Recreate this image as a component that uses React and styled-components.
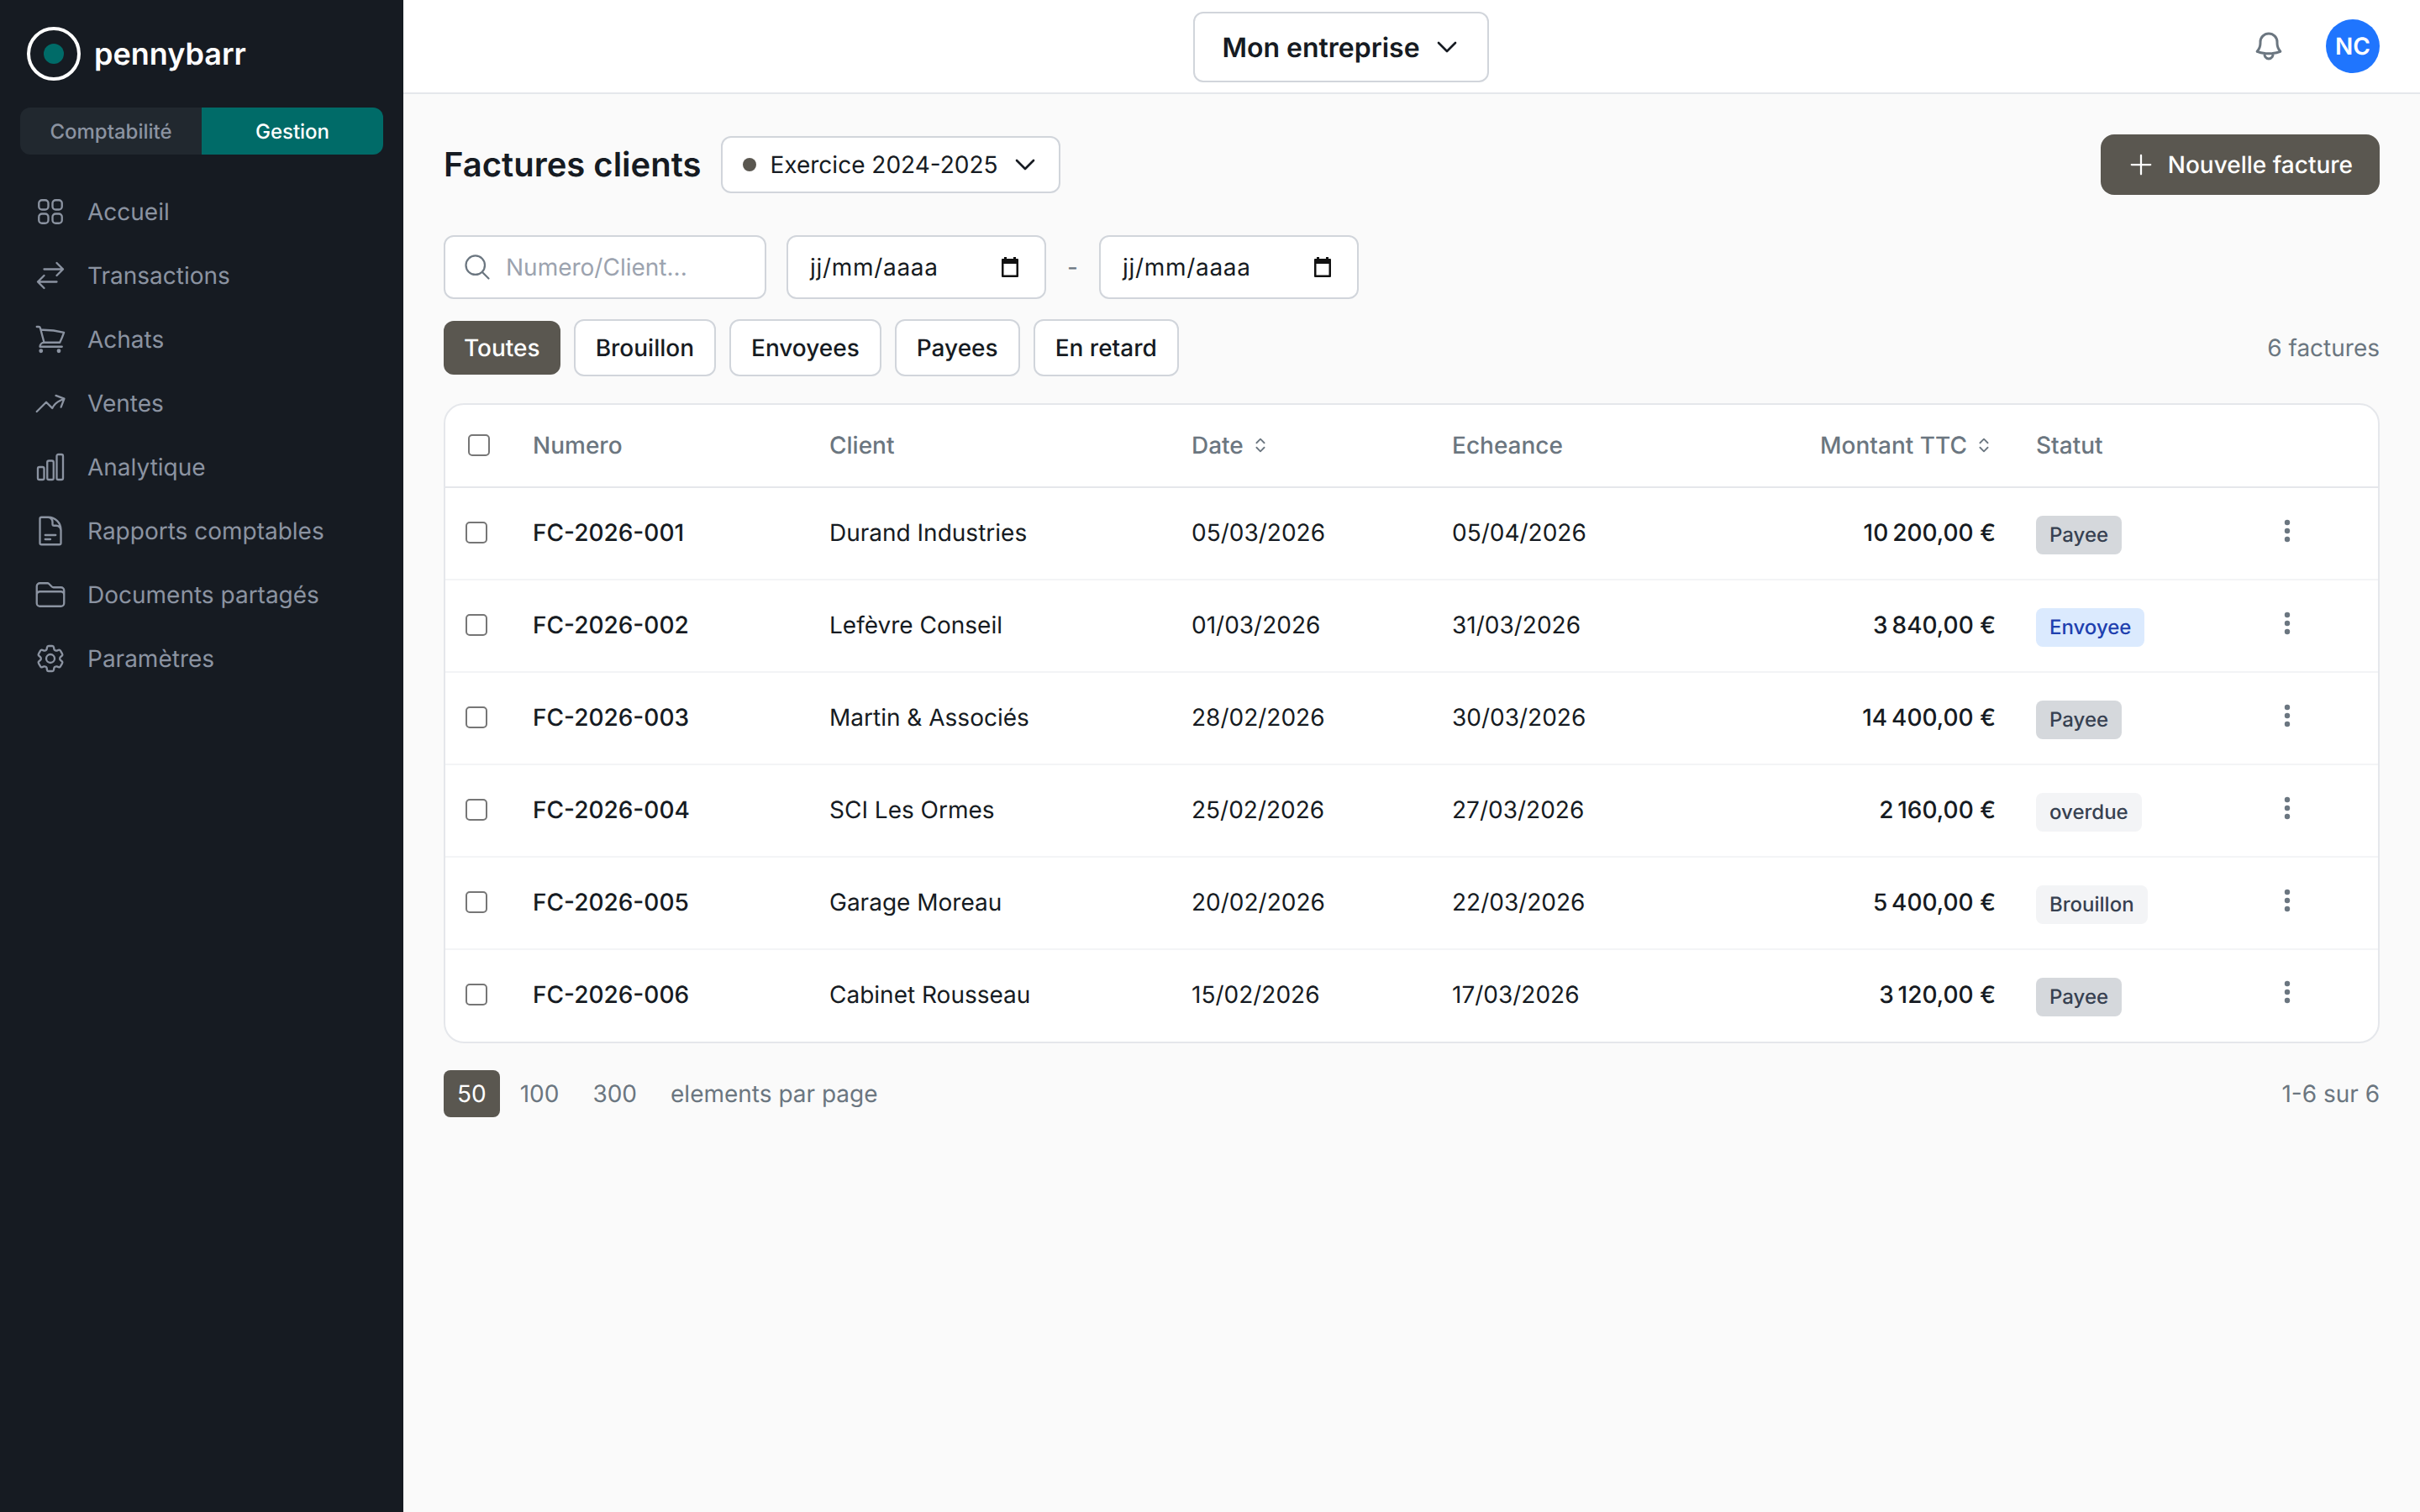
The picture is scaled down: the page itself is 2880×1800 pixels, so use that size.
import React from 'react';
import styled, { createGlobalStyle } from 'styled-components';
import { ChevronsUpDown } from 'lucide-react';
import {
  HiOutlineSquares2X2,
  HiOutlineArrowsRightLeft,
  HiOutlineShoppingCart,
  HiOutlineArrowTrendingUp,
  HiOutlineChartBar,
  HiOutlineDocumentText,
  HiOutlineFolder,
  HiOutlineCog6Tooth,
  HiOutlineBell,
  HiOutlineChevronDown,
  HiOutlinePlus,
  HiOutlineMagnifyingGlass,
} from 'react-icons/hi2';

const navList = [
  { id: 0, title: 'Accueil', icon: HiOutlineSquares2X2 },
  { id: 1, title: 'Transactions', icon: HiOutlineArrowsRightLeft },
  { id: 2, title: 'Achats', icon: HiOutlineShoppingCart },
  { id: 3, title: 'Ventes', icon: HiOutlineArrowTrendingUp },
  { id: 4, title: 'Analytique', icon: HiOutlineChartBar },
  { id: 5, title: 'Rapports comptables', icon: HiOutlineDocumentText },
  { id: 6, title: 'Documents partagés', icon: HiOutlineFolder },
  { id: 7, title: 'Paramètres', icon: HiOutlineCog6Tooth },
];

const invoices = [
  { id: 'FC-2026-001', client: 'Durand Industries', date: '05/03/2026', due: '05/04/2026', amount: '10\u202f200,00 €', status: 'Payee', kind: 'paid' },
  { id: 'FC-2026-002', client: 'Lefèvre Conseil', date: '01/03/2026', due: '31/03/2026', amount: '3\u202f840,00 €', status: 'Envoyee', kind: 'sent' },
  { id: 'FC-2026-003', client: 'Martin & Associés', date: '28/02/2026', due: '30/03/2026', amount: '14\u202f400,00 €', status: 'Payee', kind: 'paid' },
  { id: 'FC-2026-004', client: 'SCI Les Ormes', date: '25/02/2026', due: '27/03/2026', amount: '2\u202f160,00 €', status: 'overdue', kind: 'draft' },
  { id: 'FC-2026-005', client: 'Garage Moreau', date: '20/02/2026', due: '22/03/2026', amount: '5\u202f400,00 €', status: 'Brouillon', kind: 'draft' },
  { id: 'FC-2026-006', client: 'Cabinet Rousseau', date: '15/02/2026', due: '17/03/2026', amount: '3\u202f120,00 €', status: 'Payee', kind: 'paid' },
];

const filters = ['Toutes', 'Brouillon', 'Envoyees', 'Payees', 'En retard'];

const badgeColors = {
  paid: { bg: '#d5d8dc', fg: '#374151' },
  sent: { bg: '#dbeafe', fg: '#1e40af' },
  draft: { bg: '#f3f4f6', fg: '#374151' },
};

function CalendarIcon() {
  return (
    <svg width="26" height="26" viewBox="0 0 26 26">
      <path d="M6 1h3v2h8V1h3v2h2a1 1 0 0 1 1 1v20a1 1 0 0 1-1 1H4a1 1 0 0 1-1-1V4a1 1 0 0 1 1-1h2z" fill="#111" />
      <rect x="5.5" y="9" width="15" height="13.5" fill="#fff" />
    </svg>
  );
}

function Kebab() {
  return (
    <svg width="12" height="28" viewBox="0 0 12 28" fill="#6b7680">
      <circle cx="6" cy="4" r="3.2" />
      <circle cx="6" cy="14" r="3.2" />
      <circle cx="6" cy="24" r="3.2" />
    </svg>
  );
}

function DateField() {
  return (
    <DateBox>
      <span>jj/mm/aaaa</span>
      <CalendarIcon />
    </DateBox>
  );
}

export default function App() {
  return (
    <>
      <GlobalStyle />
      <Layout>
        <Sidebar>
          <Logo>
            <svg width="64" height="64" viewBox="0 0 64 64">
              <circle cx="32" cy="32" r="30" fill="none" stroke="#fff" strokeWidth="4" />
              <circle cx="32" cy="32" r="12" fill="#006b68" />
            </svg>
            <LogoText>pennybarr</LogoText>
          </Logo>
          <Switcher>
            <SwitchItem>Comptabilité</SwitchItem>
            <SwitchItem $active>Gestion</SwitchItem>
          </Switcher>
          <Nav>
            {navList.map(item => {
              const Icon = item.icon;
              return (
                <NavItem key={item.id}>
                  <Icon size={40} />
                  <span>{item.title}</span>
                </NavItem>
              );
            })}
          </Nav>
        </Sidebar>

        <Main>
          <Topbar>
            <span />
            <CompanySelect>
              Mon entreprise
              <HiOutlineChevronDown size={32} strokeWidth={2} />
            </CompanySelect>
            <TopRight>
              <BellButton><HiOutlineBell size={40} color="#6b7680" strokeWidth={1.8} /></BellButton>
              <Avatar>NC</Avatar>
            </TopRight>
          </Topbar>

          <Content>
            <TitleRow>
              <Title>Factures clients</Title>
              <YearSelect>
                <YearDot />
                Exercice 2024-2025
                <HiOutlineChevronDown size={32} strokeWidth={2} />
              </YearSelect>
              <PrimaryButton>
                <HiOutlinePlus size={36} />
                Nouvelle facture
              </PrimaryButton>
            </TitleRow>

            <FilterRow>
              <SearchBox>
                <HiOutlineMagnifyingGlass size={36} color="#6b7680" />
                <span>Numero/Client...</span>
              </SearchBox>
              <DateField />
              <Dash>-</Dash>
              <DateField />
            </FilterRow>

            <TabsRow>
              {filters.map((label, i) => (
                <Tab key={label} $active={i === 0}>{label}</Tab>
              ))}
              <Count>6 factures</Count>
            </TabsRow>

            <Card>
              <Table>
                <colgroup>
                  <col style={{ width: 80 }} />
                  <col style={{ width: 353 }} />
                  <col style={{ width: 431 }} />
                  <col style={{ width: 310 }} />
                  <col style={{ width: 360 }} />
                  <col style={{ width: 335 }} />
                  <col style={{ width: 240 }} />
                  <col style={{ width: 191 }} />
                </colgroup>
                <thead>
                  <tr>
                    <HeadCell><Check $head /></HeadCell>
                    <HeadCell>Numero</HeadCell>
                    <HeadCell>Client</HeadCell>
                    <HeadCell><SortLabel>Date <ChevronsUpDown size={22} /></SortLabel></HeadCell>
                    <HeadCell>Echeance</HeadCell>
                    <HeadCell $right><SortLabel>Montant TTC <ChevronsUpDown size={22} /></SortLabel></HeadCell>
                    <HeadCell>Statut</HeadCell>
                    <HeadCell />
                  </tr>
                </thead>
                <tbody>
                  {invoices.map(row => (
                    <tr key={row.id}>
                      <BodyCell><Check /></BodyCell>
                      <BodyCell $medium>{row.id}</BodyCell>
                      <BodyCell>{row.client}</BodyCell>
                      <BodyCell>{row.date}</BodyCell>
                      <BodyCell>{row.due}</BodyCell>
                      <BodyCell $right $medium>{row.amount}</BodyCell>
                      <BadgeCell><Badge $kind={row.kind}>{row.status}</Badge></BadgeCell>
                      <ActionCell><Kebab /></ActionCell>
                    </tr>
                  ))}
                </tbody>
              </Table>
            </Card>

            <Pagination>
              <PageSize $active>50</PageSize>
              <PageSize>100</PageSize>
              <PageSize>300</PageSize>
              <PageLabel>elements par page</PageLabel>
              <PageRange>1-6 sur 6</PageRange>
            </Pagination>
          </Content>
        </Main>
      </Layout>
    </>
  );
}

const GlobalStyle = createGlobalStyle`
  * { box-sizing: border-box; }
  html, body { margin: 0; padding: 0; }
  body {
    font-family: Inter, "Liberation Sans", sans-serif;
    color: #161b22;
    background: #fafafa;
    text-rendering: geometricPrecision;
  }
`;

const Layout = styled.div`
  display: flex;
  width: 2880px;
  height: 1800px;
  overflow: hidden;
`;

const Sidebar = styled.aside`
  flex: 0 0 480px;
  background: #161b22;
  display: flex;
  flex-direction: column;
`;

const Logo = styled.div`
  display: flex;
  align-items: center;
  gap: 16px;
  padding: 32px 32px 0;
`;

const LogoText = styled.span`
  font-size: 36px;
  font-weight: 600;
  color: #fff;
`;

const Switcher = styled.div`
  display: flex;
  height: 56px;
  margin: 32px 24px 0;
  border-radius: 12px;
  overflow: hidden;
`;

const SwitchItem = styled.div`
  flex: 1;
  display: flex;
  align-items: center;
  justify-content: center;
  font-size: 24px;
  font-weight: 500;
  color: ${p => (p.$active ? '#fff' : '#8b93a1')};
  background: ${p => (p.$active ? '#006b68' : '#21282f')};
`;

const Nav = styled.nav`
  display: flex;
  flex-direction: column;
  padding: 30px 24px 0;
`;

const NavItem = styled.div`
  display: flex;
  align-items: center;
  gap: 24px;
  height: 76px;
  padding-left: 16px;
  font-size: 28px;
  color: #8b93a1;
  svg { stroke-width: 1.4; }
`;

const Main = styled.div`
  flex: 1;
  min-width: 0;
  display: flex;
  flex-direction: column;
`;

const Topbar = styled.header`
  display: flex;
  align-items: center;
  justify-content: space-between;
  height: 112px;
  padding: 0 48px;
  background: #fff;
  border-bottom: 2px solid #e5e7eb;
`;

const CompanySelect = styled.div`
  display: flex;
  align-items: center;
  gap: 16px;
  height: 84px;
  margin-top: 2px;
  padding: 0 32px;
  background: #fff;
  border: 2px solid #d1d5db;
  border-radius: 12px;
  font-size: 32px;
  font-weight: 600;
`;

const TopRight = styled.div`
  display: flex;
  align-items: center;
  gap: 32px;
`;

const BellButton = styled.div`
  display: flex;
  align-items: center;
  justify-content: center;
  width: 72px;
  height: 72px;
`;

const Avatar = styled.div`
  width: 64px;
  height: 64px;
  border-radius: 50%;
  background: #1f75fe;
  color: #fff;
  display: flex;
  align-items: center;
  justify-content: center;
  font-size: 28px;
  font-weight: 600;
`;

const Content = styled.main`
  flex: 1;
  padding: 48px 48px 0;
  background: #fafafa;
`;

const TitleRow = styled.div`
  display: flex;
  align-items: center;
  gap: 24px;
  height: 72px;
`;

const Title = styled.h1`
  margin: 0 0 2px;
  font-size: 40px;
  font-weight: 600;
`;

const YearSelect = styled.div`
  display: flex;
  align-items: center;
  gap: 16px;
  height: 68px;
  padding: 0 24px;
  background: #fff;
  border: 2px solid #d1d5db;
  border-radius: 12px;
  font-size: 28px;
`;

const YearDot = styled.span`
  width: 16px;
  height: 16px;
  border-radius: 50%;
  background: #5a5750;
`;

const PrimaryButton = styled.div`
  margin-left: auto;
  display: flex;
  align-items: center;
  gap: 14px;
  height: 72px;
  padding: 0 32px 0 30px;
  border-radius: 16px;
  background: #5a5750;
  color: #fff;
  font-size: 28px;
  font-weight: 500;
`;

const FilterRow = styled.div`
  display: flex;
  align-items: center;
  gap: 24px;
  margin-top: 48px;
`;

const FieldBox = styled.div`
  display: flex;
  align-items: center;
  height: 76px;
  background: #fff;
  border: 2px solid #d1d5db;
  border-radius: 12px;
  font-size: 28px;
`;

const SearchBox = styled(FieldBox)`
  width: 384px;
  gap: 16px;
  padding: 0 20px;
  color: #9ca3af;
`;

const DateBox = styled(FieldBox)`
  width: 309px;
  justify-content: space-between;
  padding: 0 28px 0 26px;
  color: #161b22;
  letter-spacing: 0.7px;
`;

const Dash = styled.span`
  width: 15px;
  text-align: center;
  font-size: 28px;
  color: #6b7680;
`;

const TabsRow = styled.div`
  display: flex;
  align-items: center;
  gap: 16px;
  margin-top: 24px;
  height: 68px;
`;

const Tab = styled.div`
  display: flex;
  align-items: center;
  height: ${p => (p.$active ? '64px' : '68px')};
  padding: 0 24px;
  border-radius: 12px;
  font-size: 28px;
  font-weight: 500;
  border: ${p => (p.$active ? 'none' : '2px solid #d1d5db')};
  background: ${p => (p.$active ? '#5a5750' : '#fff')};
  color: ${p => (p.$active ? '#fff' : '#161b22')};
`;

const Count = styled.span`
  margin-left: auto;
  font-size: 28px;
  color: #6b7680;
`;

const Card = styled.div`
  margin-top: 32px;
  background: #fff;
  border: 2px solid #e5e7eb;
  border-radius: 24px;
  overflow: hidden;
`;

const Table = styled.table`
  width: 100%;
  table-layout: fixed;
  border-collapse: collapse;
`;

const HeadCell = styled.th`
  height: 98px;
  padding: 0 ${p => (p.$right ? '27px' : '24px')} 2px 24px;
  font-size: 28px;
  font-weight: 500;
  color: #6b7680;
  text-align: ${p => (p.$right ? 'right' : 'left')};
  border-bottom: 2px solid #e5e7eb;
  white-space: nowrap;
`;

const SortLabel = styled.span`
  display: inline-flex;
  align-items: center;
  gap: 9px;
`;

const BodyCell = styled.td`
  height: 110px;
  padding: 0 24px 2px;
  font-size: 28px;
  font-weight: ${p => (p.$medium ? 500 : 400)};
  text-align: ${p => (p.$right ? 'right' : 'left')};
  border-bottom: 2px solid #f3f4f6;
  white-space: nowrap;
  tr:last-child & { border-bottom: 0; padding-bottom: 4px; }
`;

const BadgeCell = styled(BodyCell)`
  padding: 4px 24px 0;
  tr:last-child && { padding-bottom: 2px; }
`;

const ActionCell = styled(BodyCell)`
  padding: 0 24px 0 77px;
  tr:last-child && { padding-bottom: 2px; }
`;

const Check = styled.span`
  display: block;
  width: 26px;
  height: 26px;
  margin-left: ${p => (p.$head ? '3px' : '0')};
  border: 2px solid #767676;
  border-radius: 5px;
  background: #fff;
`;

const Badge = styled.span`
  display: inline-block;
  padding: 8px 16px;
  border-radius: 8px;
  font-size: 24px;
  line-height: 30px;
  font-weight: 500;
  background: ${p => badgeColors[p.$kind].bg};
  color: ${p => badgeColors[p.$kind].fg};
`;

const Pagination = styled.div`
  display: flex;
  align-items: center;
  margin-top: 32px;
  font-size: 28px;
  color: #6b7680;
`;

const PageSize = styled.span`
  display: flex;
  align-items: center;
  justify-content: center;
  height: 56px;
  padding: 0 16px;
  margin-right: 8px;
  border-radius: 8px;
  background: ${p => (p.$active ? '#5a5750' : 'transparent')};
  color: ${p => (p.$active ? '#fff' : '#6b7680')};
`;

const PageLabel = styled.span`
  margin-left: 16px;
`;

const PageRange = styled.span`
  margin-left: auto;
`;
